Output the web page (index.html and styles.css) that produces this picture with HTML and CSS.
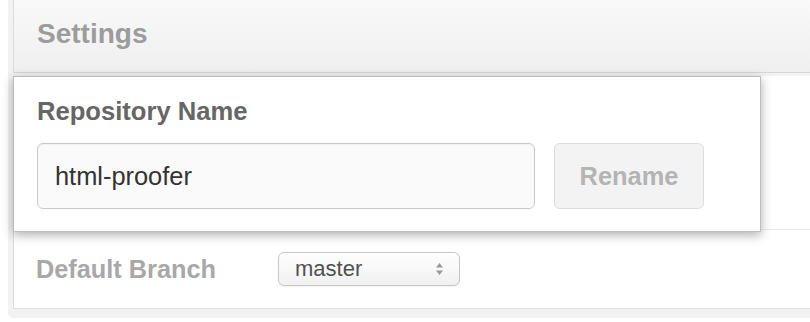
FILE: index.html
```html
<!DOCTYPE html>
<html lang="en">
<head>
    <meta charset="UTF-8">
    <meta name="viewport" content="width=device-width, initial-scale=1.0">
    <title>Settings</title>
    <link rel="stylesheet" href="styles.css">
</head>
<body>
    <div class="boxed-group">
        <h3 class="boxed-title">Settings</h3>

        <div class="boxed-inner">
            <!-- Repository name (highlighted) -->
            <div class="settings-row">
                <div class="rename-card">
                    <label class="field-label" for="repo-name">Repository Name</label>
                    <div class="rename-form">
                        <input type="text" id="repo-name" class="text-input" value="html-proofer">
                        <button type="button" class="btn-rename" disabled>Rename</button>
                    </div>
                </div>
            </div>

            <!-- Default branch -->
            <div class="branch-row">
                <span class="branch-label">Default Branch</span>
                <div class="select-box">
                    <span class="select-value">master</span>
                    <svg class="select-arrows" width="9" height="14" viewBox="0 0 9 14">
                        <path d="M4.5 1 L8 5.5 L1 5.5 Z" fill="#999"/>
                        <path d="M4.5 13 L8 8.5 L1 8.5 Z" fill="#999"/>
                    </svg>
                </div>
            </div>
        </div>
    </div>
</body>
</html>
```

FILE: styles.css
```css
:root {
    --frame-color: #f2f2f2;
    --border-color: #dcdcdc;
    --line-color: #ebebeb;
    --muted-text: #a8a8a8;
    --label-text: #666;
}

* {
    box-sizing: border-box;
    margin: 0;
    padding: 0;
    font-family: "Liberation Sans", Arial, Helvetica, sans-serif;
}

body {
    background-color: #fff;
    overflow: hidden;
}

.boxed-group {
    margin-left: 8px;
    width: 830px;
    padding: 0 5px 9px 5px;
    background-color: var(--frame-color);
    border-radius: 0 0 5px 5px;
}

.boxed-title {
    height: 73px;
    padding: 18px 23px 0;
    font-size: 28px;
    line-height: 32px;
    font-weight: bold;
    color: #9c9c9c;
    background: linear-gradient(to bottom, #f9f9f9, #efefef);
    border-left: 1px solid var(--border-color);
    border-bottom: 1px solid #d6d6d6;
}

.boxed-inner {
    background-color: #fff;
    border-left: 1px solid var(--border-color);
    border-bottom: 1px solid #e2e2e2;
}

.settings-row {
    border-bottom: 1px solid var(--line-color);
}

.rename-card {
    width: 748px;
    margin: 3px 0 -3px -1px;
    padding: 19px 23px 22px;
    background-color: #fff;
    border: 1px solid #bdbdbd;
    box-shadow: 0 3px 10px rgba(0, 0, 0, 0.32);
}

.field-label {
    display: block;
    margin-bottom: 17px;
    font-size: 25.6px;
    line-height: 30px;
    font-weight: bold;
    color: var(--label-text);
}

.rename-form {
    display: flex;
    gap: 19px;
}

.text-input {
    width: 498px;
    height: 66px;
    padding: 0 17px;
    font-size: 25.4px;
    color: #333;
    background-color: #fafafa;
    border: 1px solid #c8c8c8;
    border-radius: 6px;
    box-shadow: inset 0 1px 2px rgba(0, 0, 0, 0.04);
}

.text-input:focus {
    outline: none;
}

.btn-rename {
    width: 150px;
    height: 66px;
    font-size: 25.4px;
    font-weight: bold;
    color: #b4b4b4;
    background-color: #f3f3f3;
    border: 1px solid #dedede;
    border-radius: 6px;
}

.branch-row {
    display: flex;
    align-items: center;
    height: 78px;
    padding-left: 22px;
}

.branch-label {
    width: 242px;
    font-size: 25.3px;
    font-weight: bold;
    color: var(--muted-text);
}

.select-box {
    display: flex;
    align-items: center;
    justify-content: space-between;
    width: 182px;
    height: 34px;
    padding: 0 15px 0 16px;
    background: linear-gradient(to bottom, #fff, #f1f1f1);
    border: 1px solid #c6c6c6;
    border-radius: 6px;
    box-shadow: 0 1px 1px rgba(0, 0, 0, 0.05);
}

.select-value {
    font-size: 22px;
    color: #505050;
}
```
